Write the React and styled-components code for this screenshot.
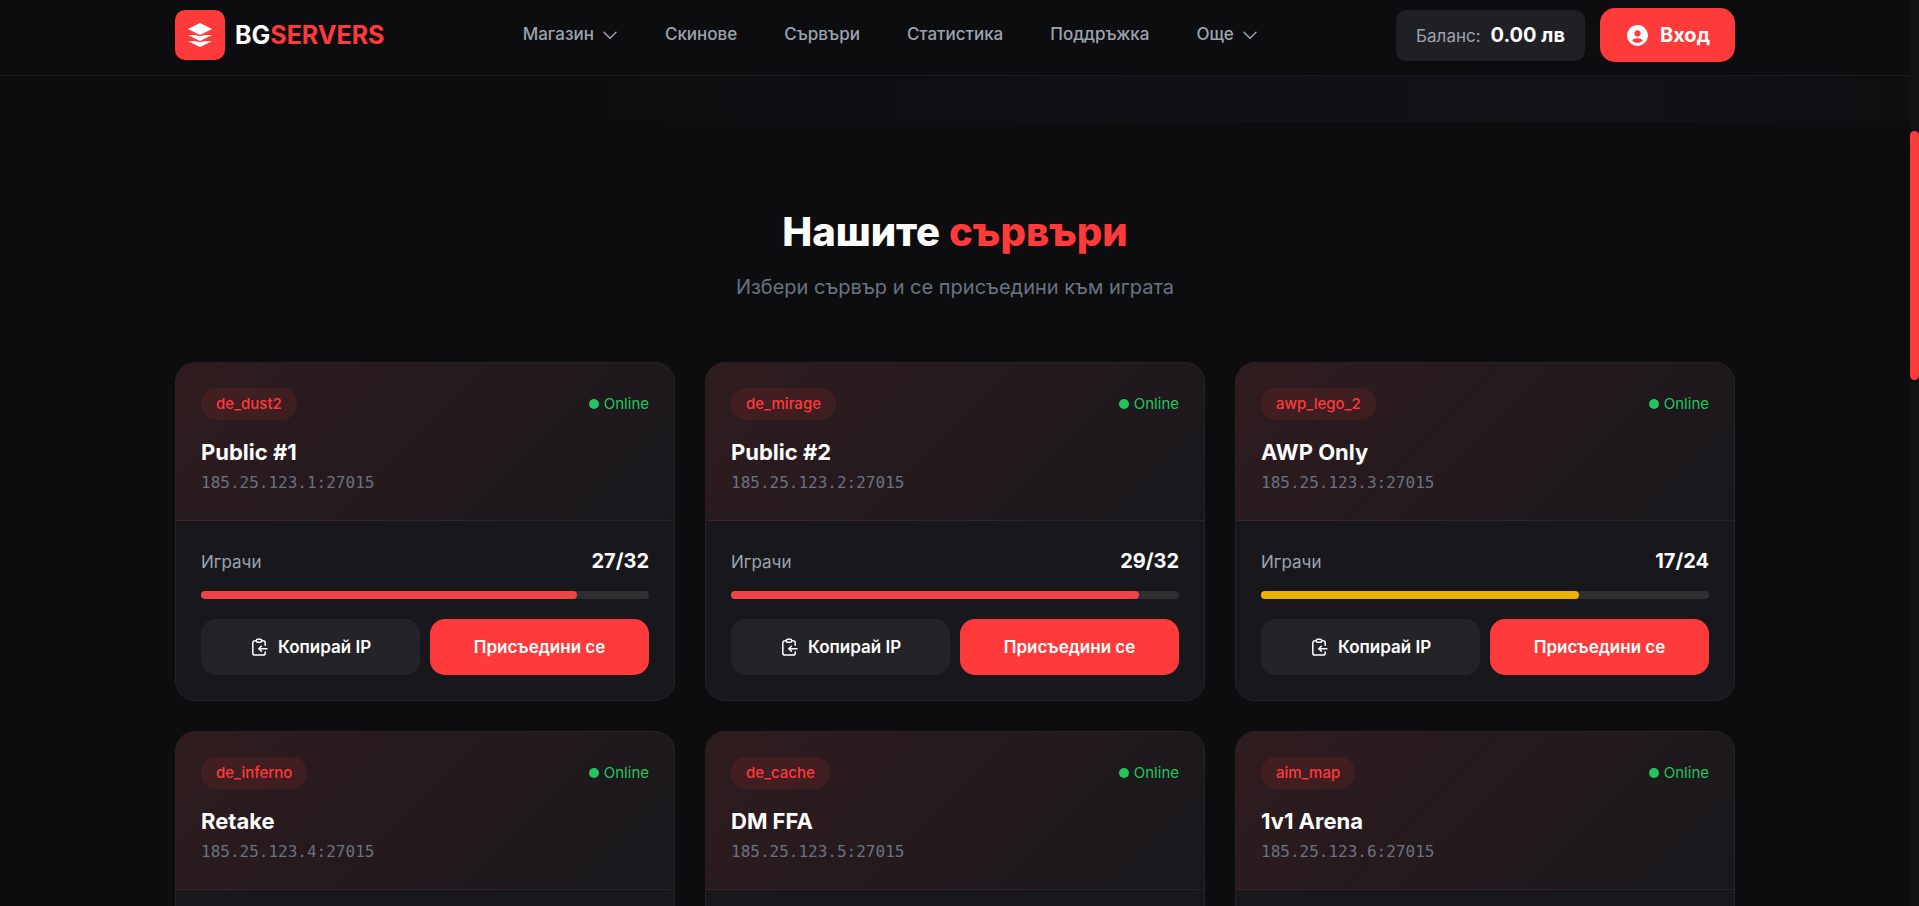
import React from 'react'
import styled, { createGlobalStyle } from 'styled-components'
import { BiSolidUserCircle } from 'react-icons/bi'

const links = [
   { label: 'Магазин', menu: true },
   { label: 'Скинове' },
   { label: 'Сървъри' },
   { label: 'Статистика' },
   { label: 'Поддръжка' },
   { label: 'Още', menu: true },
]

const servers = [
   { name: 'Public #1', map: 'de_dust2', ip: '185.25.123.1:27015', players: 27, slots: 32 },
   { name: 'Public #2', map: 'de_mirage', ip: '185.25.123.2:27015', players: 29, slots: 32 },
   { name: 'AWP Only', map: 'awp_lego_2', ip: '185.25.123.3:27015', players: 17, slots: 24 },
   { name: 'Retake', map: 'de_inferno', ip: '185.25.123.4:27015', players: 9, slots: 10 },
   { name: 'DM FFA', map: 'de_cache', ip: '185.25.123.5:27015', players: 18, slots: 20 },
   { name: '1v1 Arena', map: 'aim_map', ip: '185.25.123.6:27015', players: 12, slots: 16 },
]

const LogoIcon = () => (
   <svg width="24" height="24" viewBox="0 0 24 24" fill="#fff" aria-hidden="true">
      <path d="M12 0 24 6 12 12 0 6z" />
      <path d="M0 12h7l5 1.2L17 12h7l-12 6z" />
      <path d="M0 18.2h7l5 .8 5-.8h7L12 24z" />
   </svg>
)

const ChevronIcon = () => (
   <svg
      width="16"
      height="16"
      viewBox="0 0 16 16"
      fill="none"
      stroke="currentColor"
      strokeWidth="1.5"
      strokeLinecap="round"
      strokeLinejoin="round"
      aria-hidden="true"
   >
      <path d="m2 5.2 6 6 6-6" />
   </svg>
)

const CopyIcon = () => (
   <svg
      width="18"
      height="18"
      viewBox="0 0 18 18"
      fill="none"
      stroke="currentColor"
      strokeWidth="1.5"
      strokeLinecap="round"
      strokeLinejoin="round"
      aria-hidden="true"
   >
      <rect x="6.2" y="1.2" width="5.6" height="3" rx="1.5" />
      <path d="M6 2.7H5a2.2 2.2 0 0 0-2.2 2.2v10A2.2 2.2 0 0 0 5 17.1h8a2.2 2.2 0 0 0 2.2-2.2v-.8" />
      <path d="M12 2.7h1a2.2 2.2 0 0 1 2.2 2.2v2.3" />
      <path d="M17 10.7H9.2" />
      <path d="m11.4 8.3-2.6 2.4 2.6 2.4" />
   </svg>
)

const ServerCard = ({ server }) => {
   const { name, map, ip, players, slots } = server
   const load = Math.round((players / slots) * 100)

   return (
      <Styles.Card>
         <Styles.CardHead>
            <Styles.CardTop>
               <Styles.Map>{map}</Styles.Map>
               <Styles.Status>Online</Styles.Status>
            </Styles.CardTop>
            <Styles.Name>{name}</Styles.Name>
            <Styles.Address>{ip}</Styles.Address>
         </Styles.CardHead>
         <Styles.CardBody>
            <Styles.Players>
               <span>Играчи</span>
               <strong>{`${players}/${slots}`}</strong>
            </Styles.Players>
            <Styles.Meter>
               <Styles.Fill $high={load > 80} style={{ width: `${load}%` }} />
            </Styles.Meter>
            <Styles.Actions>
               <Styles.Button type="button">
                  <CopyIcon />
                  Копирай IP
               </Styles.Button>
               <Styles.Button type="button" $primary>
                  Присъедини се
               </Styles.Button>
            </Styles.Actions>
         </Styles.CardBody>
      </Styles.Card>
   )
}

const Header = () => (
   <Styles.Header>
      <Styles.Container>
         <Styles.HeaderRow>
            <Styles.Logo href="#">
               <Styles.LogoBox>
                  <LogoIcon />
               </Styles.LogoBox>
               <span>
                  BG<em>SERVERS</em>
               </span>
            </Styles.Logo>
            <Styles.Nav>
               {links.map(({ label, menu }) => (
                  <Styles.NavLink href="#" key={label}>
                     {label}
                     {menu && <ChevronIcon />}
                  </Styles.NavLink>
               ))}
            </Styles.Nav>
            <Styles.Account>
               <Styles.Balance>
                  <span>Баланс:</span>
                  <strong>0.00 лв</strong>
               </Styles.Balance>
               <Styles.Login type="button">
                  <BiSolidUserCircle size={25} />
                  Вход
               </Styles.Login>
            </Styles.Account>
         </Styles.HeaderRow>
      </Styles.Container>
   </Styles.Header>
)

const App = () => (
   <>
      <GlobalStyle />
      <Styles.Page>
         <Styles.Main>
            <Header />
            <Styles.Hero />
            <Styles.Section>
               <Styles.Container>
                  <Styles.Heading>
                     <h2>
                        Нашите <em>сървъри</em>
                     </h2>
                     <p>Избери сървър и се присъедини към играта</p>
                  </Styles.Heading>
                  <Styles.Grid>
                     {servers.map(server => (
                        <ServerCard server={server} key={server.ip} />
                     ))}
                  </Styles.Grid>
               </Styles.Container>
            </Styles.Section>
         </Styles.Main>
         <Styles.Track>
            <Styles.Thumb />
         </Styles.Track>
      </Styles.Page>
   </>
)

export default App

const GlobalStyle = createGlobalStyle`
   * {
      box-sizing: border-box;
      margin: 0;
      padding: 0;
   }
   body {
      background: #0d0d0f;
      color: #fff;
      font-family: Inter, sans-serif;
      font-size: 17px;
      line-height: 1.6;
   }
   button {
      border: 0;
      font-family: inherit;
      cursor: pointer;
   }
   em {
      font-style: normal;
      color: #ff3a3a;
   }
`

const Styles = {
   Page: styled.div`
      display: flex;
      height: 100vh;
   `,
   Main: styled.main`
      flex: 1;
      min-width: 0;
      overflow-y: auto;
      scrollbar-width: none;
   `,
   Track: styled.div`
      width: 9px;
      padding-top: 131px;
      background: #121214;
   `,
   Thumb: styled.div`
      height: 249px;
      border-radius: 5px;
      background: #ff3a3a;
   `,
   Container: styled.div`
      max-width: 1600px;
      margin: 0 auto;
      padding: 0 20px;
   `,
   Header: styled.header`
      position: sticky;
      top: 0;
      z-index: 10;
      padding: 8px 0 13px;
      border-bottom: 1px solid #1b1b1d;
      background: #0d0d0f;
   `,
   HeaderRow: styled.div`
      display: flex;
      align-items: center;
      justify-content: space-between;
   `,
   Logo: styled.a`
      display: flex;
      align-items: center;
      gap: 10px;
      color: #fff;
      font-size: 25px;
      font-weight: 700;
      text-decoration: none;
   `,
   LogoBox: styled.span`
      display: flex;
      align-items: center;
      justify-content: center;
      width: 50px;
      height: 50px;
      border-radius: 10px;
      background: #ff3a3a;
   `,
   Nav: styled.nav`
      display: flex;
      gap: 47px;
   `,
   NavLink: styled.a`
      display: flex;
      align-items: center;
      gap: 8px;
      color: #9ca3af;
      font-weight: 500;
      text-decoration: none;
   `,
   Account: styled.div`
      display: flex;
      align-items: center;
      gap: 15px;
   `,
   Balance: styled.div`
      display: flex;
      align-items: baseline;
      gap: 10px;
      padding: 0 20px;
      border-radius: 10px;
      background: #1f1f24;
      line-height: 50px;
      span {
         color: #9ca3af;
      }
      strong {
         font-size: 20px;
         font-weight: 700;
      }
   `,
   Login: styled.button`
      display: flex;
      align-items: center;
      gap: 10px;
      height: 54px;
      padding: 0 25px;
      border-radius: 15px;
      background: #ff3a3a;
      color: #fff;
      font-size: 20px;
      font-weight: 700;
   `,
   Hero: styled.div`
      height: 46px;
      background: linear-gradient(90deg, #0d0d0f 25%, #101116 65%, #111116 85%, #0f0f12);
   `,
   Section: styled.section`
      padding: 80px 0;
   `,
   Heading: styled.div`
      margin-bottom: 60px;
      text-align: center;
      h2 {
         margin-bottom: 10px;
         font-size: 40px;
         font-weight: 800;
         line-height: 60px;
      }
      p {
         color: #6b7280;
         font-size: 20px;
         line-height: 30px;
      }
   `,
   Grid: styled.div`
      display: grid;
      grid-template-columns: repeat(3, 1fr);
      gap: 30px;
   `,
   Card: styled.article`
      overflow: hidden;
      border: 1px solid #242427;
      border-radius: 20px;
      background: #18181c;
   `,
   CardHead: styled.div`
      padding: 25px;
      border-bottom: 1px solid rgba(255, 255, 255, 0.05);
      background: linear-gradient(135deg, rgba(255, 58, 58, 0.1), transparent);
   `,
   CardTop: styled.div`
      display: flex;
      align-items: center;
      justify-content: space-between;
      margin-bottom: 15px;
   `,
   Map: styled.span`
      padding: 4px 15px;
      border-radius: 15px;
      background: rgba(255, 58, 58, 0.1);
      color: #ff3a3a;
      font-size: 15px;
      font-weight: 500;
      line-height: 24px;
   `,
   Status: styled.span`
      display: flex;
      align-items: center;
      gap: 5px;
      color: #22c55e;
      font-size: 15px;
      &::before {
         content: '';
         width: 10px;
         height: 10px;
         border-radius: 50%;
         background: #22c55e;
      }
   `,
   Name: styled.h3`
      font-size: 22px;
      font-weight: 700;
      line-height: 35px;
   `,
   Address: styled.p`
      color: #6b7280;
      font-family: 'DejaVu Sans Mono', monospace;
      font-size: 16px;
      line-height: 25px;
   `,
   CardBody: styled.div`
      padding: 25px;
   `,
   Players: styled.div`
      display: flex;
      align-items: baseline;
      justify-content: space-between;
      height: 30px;
      margin-bottom: 15px;
      line-height: 30px;
      span {
         color: #9ca3af;
      }
      strong {
         font-size: 20px;
         font-weight: 700;
      }
   `,
   Meter: styled.div`
      height: 8px;
      margin-bottom: 20px;
      border-radius: 4px;
      background: #2f2f32;
   `,
   Fill: styled.div`
      height: 100%;
      border-radius: 4px;
      background: ${({ $high }) => ($high ? '#ef4444' : '#eab308')};
   `,
   Actions: styled.div`
      display: grid;
      grid-template-columns: 1fr 1fr;
      gap: 10px;
   `,
   Button: styled.button`
      display: flex;
      align-items: center;
      justify-content: center;
      gap: 10px;
      height: 56px;
      border-radius: 15px;
      background: ${({ $primary }) => ($primary ? '#ff3a3a' : '#242428')};
      color: #fff;
      font-size: 17px;
      font-weight: 600;
   `,
}
